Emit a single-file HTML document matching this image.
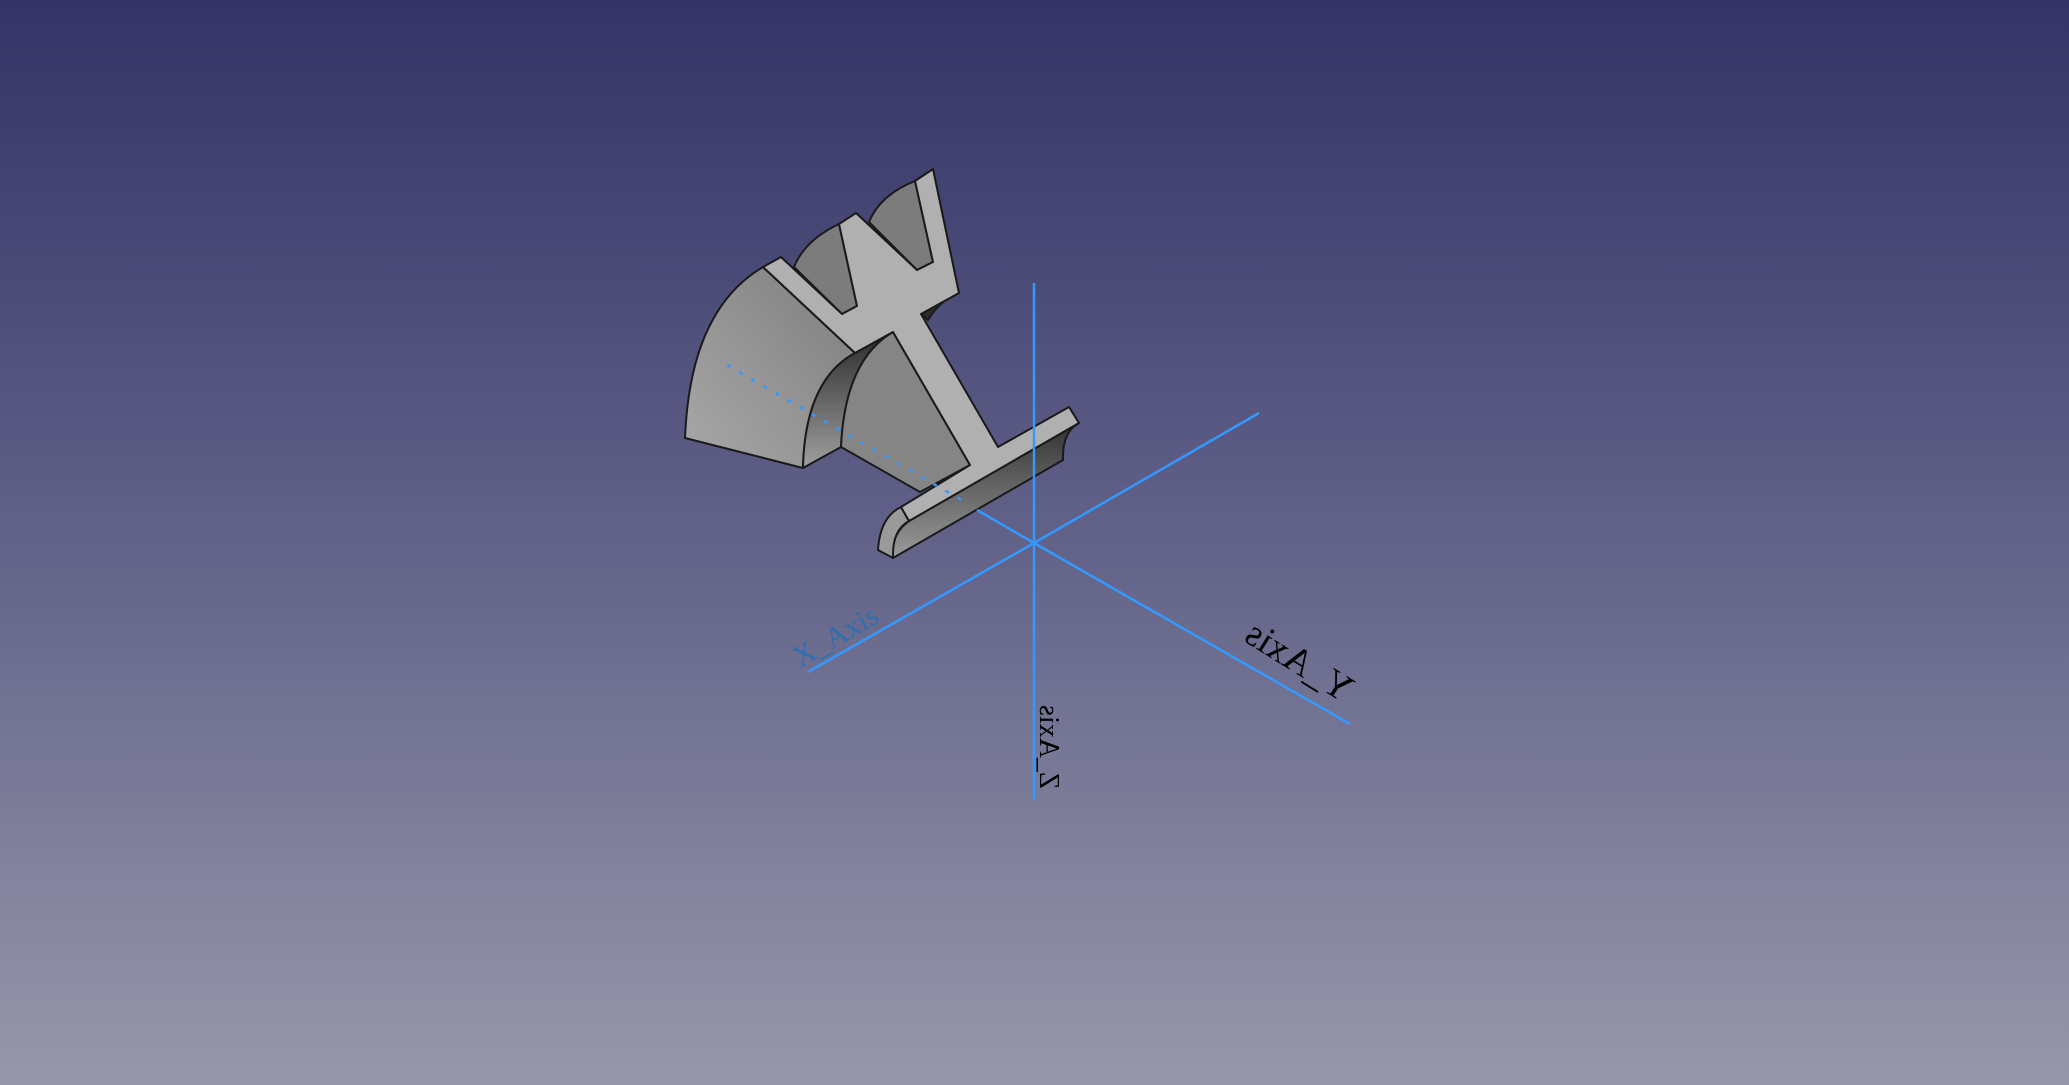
<!DOCTYPE html>
<html><head><meta charset="utf-8"><style>
html,body{margin:0;padding:0;width:2069px;height:1085px;overflow:hidden}
body{background:linear-gradient(#333366,#5d5d86 45%,#9797aa)}
svg{position:absolute;left:0;top:0}
</style></head><body>
<svg width="2069" height="1085" viewBox="0 0 2069 1085">
<defs>
<linearGradient id="lf" x1="1" y1="0" x2="0" y2="1"><stop offset="0" stop-color="#7e7e7e"/><stop offset="1" stop-color="#a8a8a8"/></linearGradient>
<linearGradient id="dk" x1="0" y1="0" x2="0" y2="1"><stop offset="0" stop-color="#2a2a2a"/><stop offset="1" stop-color="#a0a0a0"/></linearGradient>
<linearGradient id="fl" x1="0" y1="0" x2="0" y2="1"><stop offset="0" stop-color="#333"/><stop offset="1" stop-color="#9a9a9a"/></linearGradient>
</defs>
<g stroke="#1a1a1a" stroke-width="2" stroke-linejoin="round">
<path d="M794,267 Q805,240 839,224 L857,306 L842,314 Z" fill="#7c7c7c"/>
<path d="M869,222 Q880,195 915,181 L933,262 L917,270 Z" fill="#7c7c7c"/>
<path d="M921,314 L959,293 Q940,300 928,320 Z" fill="#2a2a2a"/>
<path d="M763,267 Q690,310 685,438 L803,468 Q805,380 855,353 Z" fill="url(#lf)"/>
<path d="M855,353 L893,332 Q845,360 841,447 L803,468 Q805,380 855,353 Z" fill="url(#dk)"/>
<path d="M893,332 Q845,360 841,447 L920,492 L970,465 Z" fill="#858585"/>
<path d="M909,521 L1079,423 Q1062,432 1063,460 L893,558 Q890,535 909,521 Z" fill="url(#fl)"/>
<path d="M901,507 Q880,517 878,550 L893,558 Q892,530 909,521 Z" fill="#9a9a9a"/>
<path d="M763,267 L781,257 L842,314 L857,306 L839,224 L856,213 L917,270 L933,262 L915,181 L933,169 L959,293 L921,314 L998,447 L1069,407 L1079,423 L909,521 L901,507 L970,465 L893,332 L855,353 Z" fill="#b0b0b0"/>
</g>
<g stroke="#3399ff" stroke-width="2.5" fill="none">
<line x1="1034" y1="283" x2="1034" y2="800"/>
<line x1="1034" y1="543" x2="808" y2="672"/>
<line x1="1034" y1="543" x2="1259" y2="413"/>
<line x1="1034" y1="543" x2="1350" y2="724"/>
<line x1="977" y1="510" x2="1034" y2="543"/>
<line x1="727" y1="365" x2="965" y2="502" stroke-dasharray="4,10"/>
</g>
<text x="0" y="0" font-family="Liberation Serif, serif" font-size="30" fill="#2f6fb0" transform="translate(800,668) rotate(-30)">X_Axis</text>
<text x="0" y="0" font-family="Liberation Serif, serif" font-size="38" fill="#000" transform="translate(1343,703) rotate(32) scale(-1,1)">Y_Axis</text>
<text x="0" y="0" font-family="Liberation Serif, serif" font-size="28" fill="#000" transform="translate(1040,789) rotate(90) scale(-1,1)">Z_Axis</text>
</svg>
</body></html>
